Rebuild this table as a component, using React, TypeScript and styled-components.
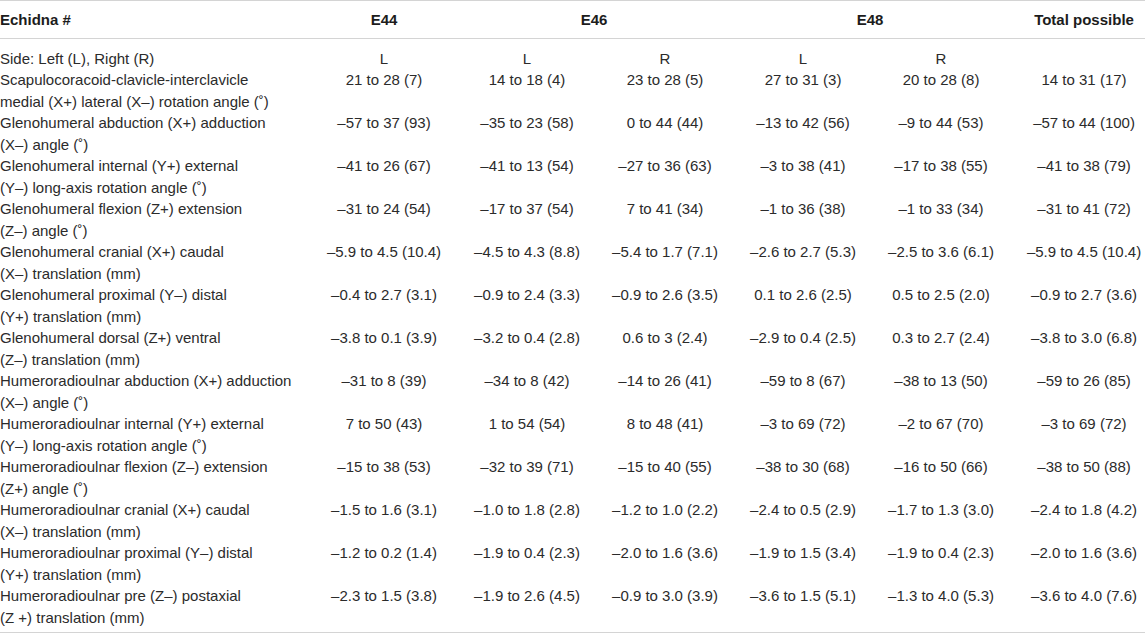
import React from 'react'
import styled, { createGlobalStyle } from 'styled-components'

const GlobalStyle = createGlobalStyle`
  html, body {
    margin: 0;
    padding: 0;
    background: #fff;
  }
  body {
    font-family: 'Liberation Sans', Arial, sans-serif;
    color: #2b2b2b;
  }
`

const Table = styled.table`
  width: 1145px;
  border-collapse: collapse;
  table-layout: fixed;
  font-size: 15px;
  line-height: 21.5px;
  border-top: 1px solid #d4d4d4;
  border-bottom: 1px solid #d4d4d4;
`

const HeadCell = styled.th<{ $left?: boolean; $pad?: number }>`
  height: 37px;
  padding: 0 0 0 ${(p) => p.$pad || 0}px;
  font-weight: bold;
  color: #1c1c1c;
  text-align: ${(p) => (p.$left ? 'left' : 'center')};
  vertical-align: middle;
  border-bottom: 1px solid #d4d4d4;
`

const Spacer = styled.tr`
  height: 9px;
`

const EndSpacer = styled.tr`
  height: 4px;
`

const Label = styled.td`
  padding: 0;
  text-align: left;
  vertical-align: top;
  white-space: nowrap;
`

const Value = styled.td<{ $pad?: number }>`
  padding: 0 0 0 ${(p) => p.$pad || 0}px;
  text-align: center;
  vertical-align: top;
  white-space: nowrap;
`

const Row = styled.tr<{ $single?: boolean }>`
  height: ${(p) => (p.$single ? 21.5 : 43)}px;
`

const widths = [312, 144, 142, 134, 142, 134, 137]

type DataRow = { label: string[]; values: string[] }

const rows: DataRow[] = [
  {
    label: ['Scapulocoracoid-clavicle-interclavicle', 'medial (X+) lateral (X–) rotation angle (˚)'],
    values: ['21 to 28 (7)', '14 to 18 (4)', '23 to 28 (5)', '27 to 31 (3)', '20 to 28 (8)', '14 to 31 (17)'],
  },
  {
    label: ['Glenohumeral abduction (X+) adduction', '(X–) angle (˚)'],
    values: ['–57 to 37 (93)', '–35 to 23 (58)', '0 to 44 (44)', '–13 to 42 (56)', '–9 to 44 (53)', '–57 to 44 (100)'],
  },
  {
    label: ['Glenohumeral internal (Y+) external', '(Y–) long-axis rotation angle (˚)'],
    values: ['–41 to 26 (67)', '–41 to 13 (54)', '–27 to 36 (63)', '–3 to 38 (41)', '–17 to 38 (55)', '–41 to 38 (79)'],
  },
  {
    label: ['Glenohumeral flexion (Z+) extension', '(Z–) angle (˚)'],
    values: ['–31 to 24 (54)', '–17 to 37 (54)', '7 to 41 (34)', '–1 to 36 (38)', '–1 to 33 (34)', '–31 to 41 (72)'],
  },
  {
    label: ['Glenohumeral cranial (X+) caudal', '(X–) translation (mm)'],
    values: ['–5.9 to 4.5 (10.4)', '–4.5 to 4.3 (8.8)', '–5.4 to 1.7 (7.1)', '–2.6 to 2.7 (5.3)', '–2.5 to 3.6 (6.1)', '–5.9 to 4.5 (10.4)'],
  },
  {
    label: ['Glenohumeral proximal (Y–) distal', '(Y+) translation (mm)'],
    values: ['–0.4 to 2.7 (3.1)', '–0.9 to 2.4 (3.3)', '–0.9 to 2.6 (3.5)', '0.1 to 2.6 (2.5)', '0.5 to 2.5 (2.0)', '–0.9 to 2.7 (3.6)'],
  },
  {
    label: ['Glenohumeral dorsal (Z+) ventral', '(Z–) translation (mm)'],
    values: ['–3.8 to 0.1 (3.9)', '–3.2 to 0.4 (2.8)', '0.6 to 3 (2.4)', '–2.9 to 0.4 (2.5)', '0.3 to 2.7 (2.4)', '–3.8 to 3.0 (6.8)'],
  },
  {
    label: ['Humeroradioulnar abduction (X+) adduction', '(X–) angle (˚)'],
    values: ['–31 to 8 (39)', '–34 to 8 (42)', '–14 to 26 (41)', '–59 to 8 (67)', '–38 to 13 (50)', '–59 to 26 (85)'],
  },
  {
    label: ['Humeroradioulnar internal (Y+) external', '(Y–) long-axis rotation angle (˚)'],
    values: ['7 to 50 (43)', '1 to 54 (54)', '8 to 48 (41)', '–3 to 69 (72)', '–2 to 67 (70)', '–3 to 69 (72)'],
  },
  {
    label: ['Humeroradioulnar flexion (Z–) extension', '(Z+) angle (˚)'],
    values: ['–15 to 38 (53)', '–32 to 39 (71)', '–15 to 40 (55)', '–38 to 30 (68)', '–16 to 50 (66)', '–38 to 50 (88)'],
  },
  {
    label: ['Humeroradioulnar cranial (X+) caudal', '(X–) translation (mm)'],
    values: ['–1.5 to 1.6 (3.1)', '–1.0 to 1.8 (2.8)', '–1.2 to 1.0 (2.2)', '–2.4 to 0.5 (2.9)', '–1.7 to 1.3 (3.0)', '–2.4 to 1.8 (4.2)'],
  },
  {
    label: ['Humeroradioulnar proximal (Y–) distal', '(Y+) translation (mm)'],
    values: ['–1.2 to 0.2 (1.4)', '–1.9 to 0.4 (2.3)', '–2.0 to 1.6 (3.6)', '–1.9 to 1.5 (3.4)', '–1.9 to 0.4 (2.3)', '–2.0 to 1.6 (3.6)'],
  },
  {
    label: ['Humeroradioulnar pre (Z–) postaxial', '(Z +) translation (mm)'],
    values: ['–2.3 to 1.5 (3.8)', '–1.9 to 2.6 (4.5)', '–0.9 to 3.0 (3.9)', '–3.6 to 1.5 (5.1)', '–1.3 to 4.0 (5.3)', '–3.6 to 4.0 (7.6)'],
  },
]

const sides = ['L', 'L', 'R', 'L', 'R', '']

const App = () => {
  return (
    <>
      <GlobalStyle />
      <Table>
        <colgroup>
          {widths.map((w, i) => (
            <col key={i} style={{ width: w }} />
          ))}
        </colgroup>
        <thead>
          <tr>
            <HeadCell $left>Echidna #</HeadCell>
            <HeadCell>E44</HeadCell>
            <HeadCell colSpan={2}>E46</HeadCell>
            <HeadCell colSpan={2}>E48</HeadCell>
            <HeadCell $pad={15}>Total possible</HeadCell>
          </tr>
        </thead>
        <tbody>
          <Spacer />
          <Row $single>
            <Label>Side: Left (L), Right (R)</Label>
            {sides.map((s, i) => (
              <Value key={i} $pad={i === 5 ? 15 : 0}>
                {s}
              </Value>
            ))}
          </Row>
          {rows.map((r, idx) => (
            <Row key={idx}>
              <Label>
                {r.label[0]}
                <br />
                {r.label[1]}
              </Label>
              {r.values.map((v, i) => (
                <Value key={i} $pad={i === 5 ? 15 : 0}>
                  {v}
                </Value>
              ))}
            </Row>
          ))}
          <EndSpacer />
        </tbody>
      </Table>
    </>
  )
}

export default App
